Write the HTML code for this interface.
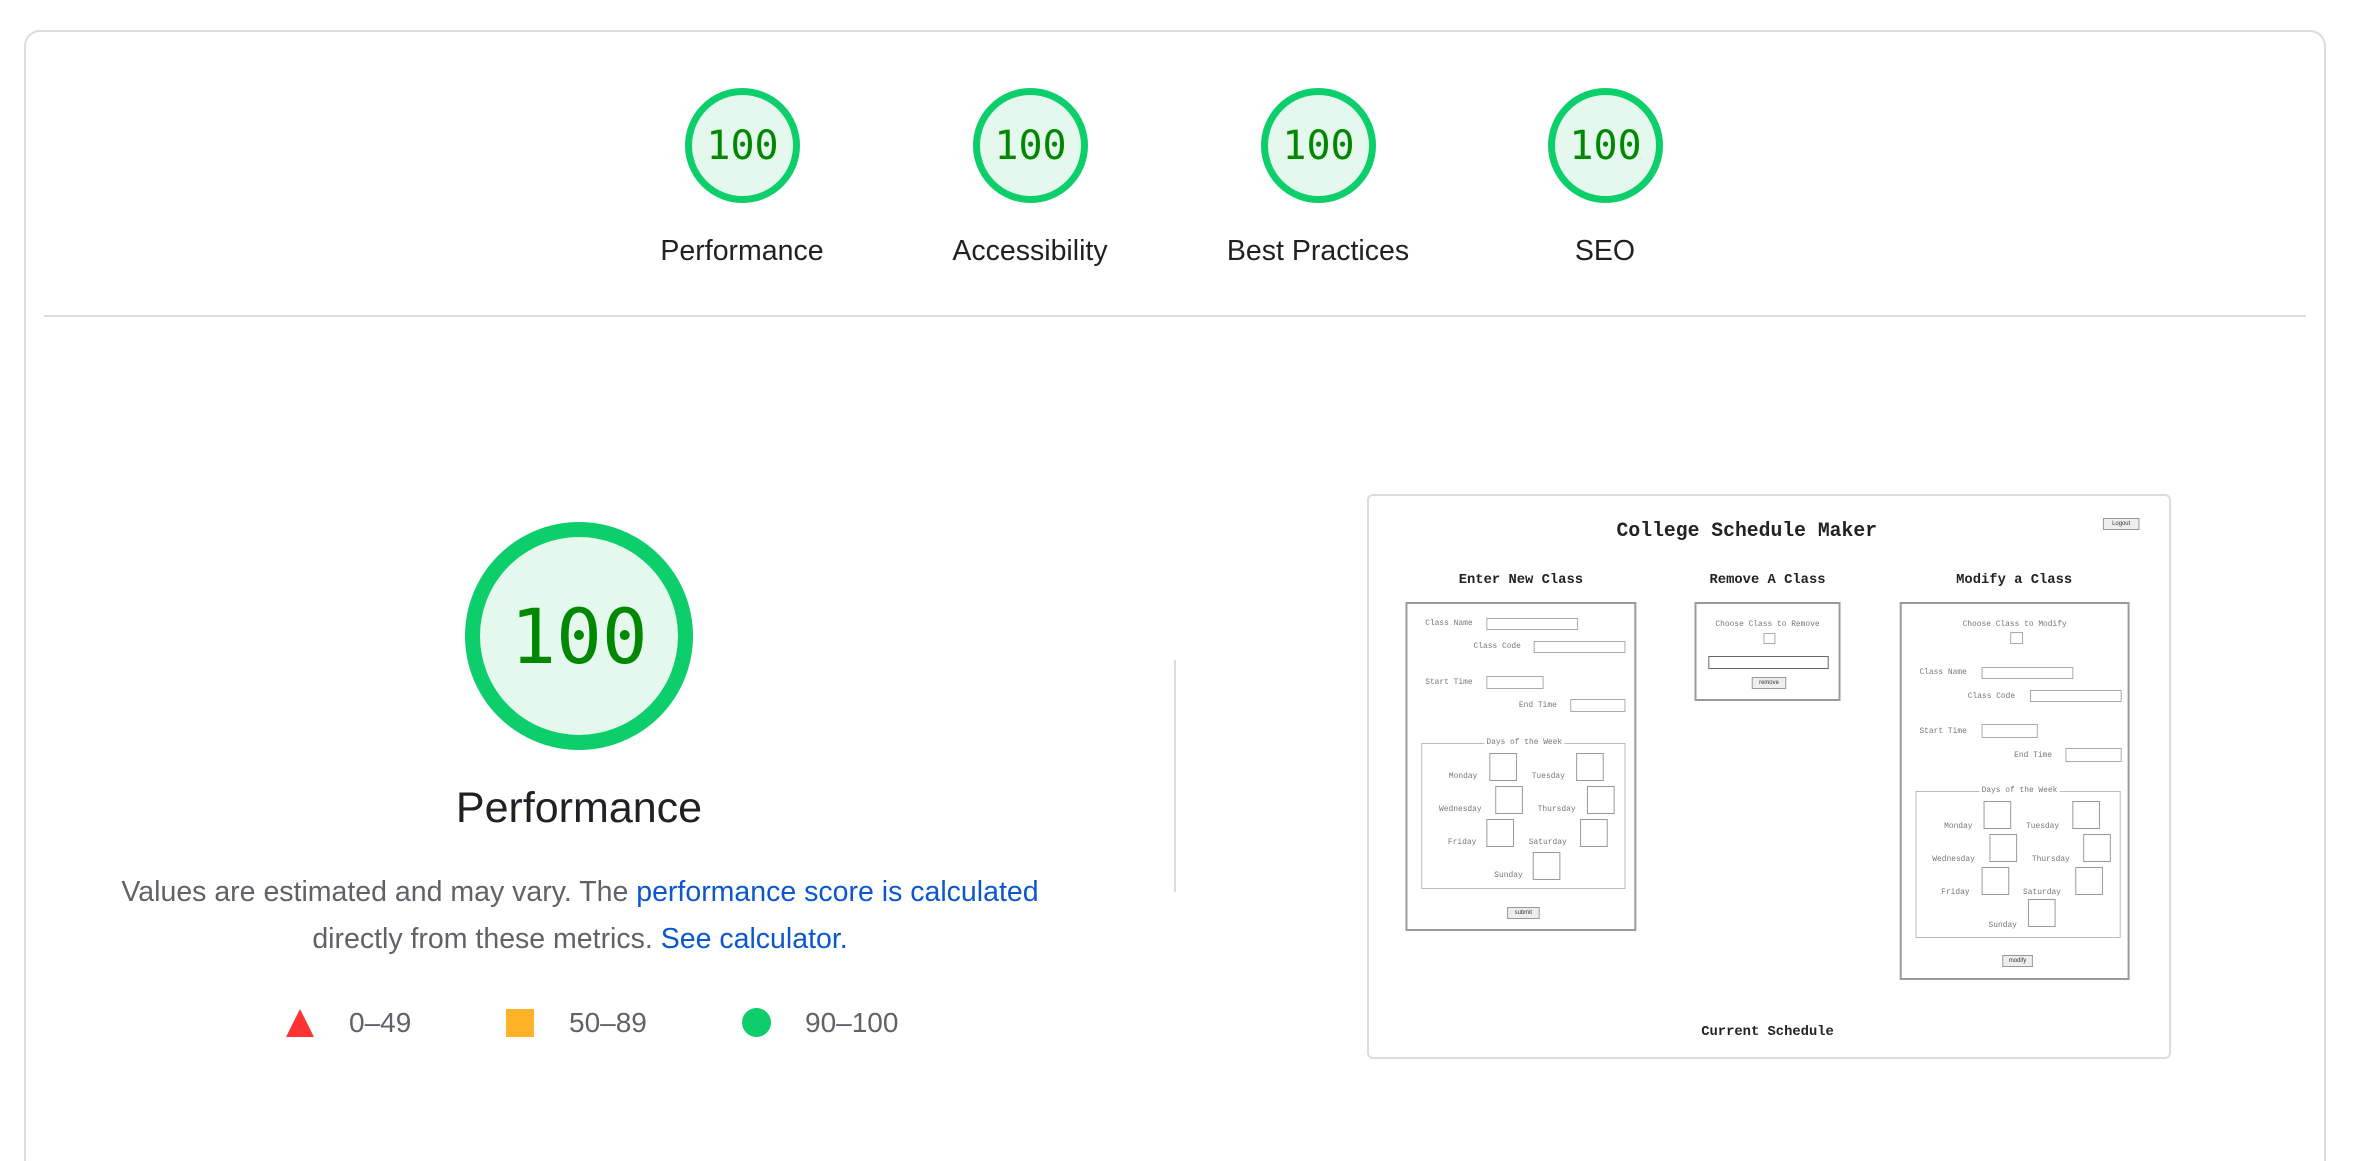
<!DOCTYPE html>
<html><head><meta charset="utf-8">
<style>
*{margin:0;padding:0;box-sizing:border-box}
html,body{width:2379px;height:1161px;overflow:hidden}
body{background:#fff;font-family:"Liberation Sans",Arial,sans-serif;position:relative}
.abs{position:absolute}
.card{left:24px;top:30px;width:2302px;height:1131px;border:2px solid #dadce0;border-bottom:none;border-radius:16px 16px 0 0}
.sep{left:44px;top:315px;width:2262px;height:2px;background:#dadce0}
.g{position:absolute;width:115px;height:115px;border-radius:50%;border:7px solid #0cce6b;background:#e5f8ee;color:#080;font-family:"DejaVu Sans Mono","Liberation Mono",monospace;font-size:40px;display:flex;align-items:center;justify-content:center}
.gl{position:absolute;width:300px;text-align:center;font-size:28.5px;color:#202124}
.big{left:465px;top:522px;width:228px;height:228px;border-width:15px;font-size:76px}
.t{position:absolute;font-family:"Liberation Mono",monospace;color:#777;font-size:8px;white-space:nowrap}
.h{position:absolute;font-family:"Liberation Mono",monospace;font-weight:bold;color:#222;white-space:nowrap;transform:translateX(-50%)}
.bx{position:absolute;border:2px solid #9a9a9a}
.in{position:absolute;border:1px solid #aaa;height:12px}
.cb{position:absolute;border:1px solid #999;width:28px;height:28px}
.btn{position:absolute;border:1px solid #999;background:#eee;font-size:6px;font-family:"Liberation Sans",sans-serif;text-align:center;line-height:10px;color:#333}
#th{position:absolute;left:0;top:0;width:2379px;height:1161px;transform-origin:1367px 493px;transform:scale(0.9865,1)}
</style></head><body>
<div class="abs card"></div>
<div class="abs sep"></div>

<div class="g" style="left:685px;top:88px">100</div>
<div class="g" style="left:973px;top:88px">100</div>
<div class="g" style="left:1261px;top:88px">100</div>
<div class="g" style="left:1548px;top:88px">100</div>
<div class="gl" style="left:592px;top:235px">Performance</div>
<div class="gl" style="left:880px;top:235px">Accessibility</div>
<div class="gl" style="left:1168px;top:235px">Best Practices</div>
<div class="gl" style="left:1455px;top:235px">SEO</div>

<div class="g big">100</div>
<div class="abs" style="left:279px;top:784px;width:600px;text-align:center;font-size:43px;color:#202124">Performance</div>
<div class="abs" style="left:60px;top:869px;width:1040px;text-align:center;font-size:28.5px;color:#5f6368;line-height:47px">Values are estimated and may vary. The <span style="color:#0b57d0">performance score is calculated</span><br>directly from these metrics. <span style="color:#0b57d0">See calculator.</span></div>

<svg class="abs" style="left:285px;top:1008px" width="30" height="30"><polygon points="15,1 29,29 1,29" fill="#f33"/></svg>
<div class="abs" style="left:349px;top:1007px;font-size:28px;color:#5f6368">0–49</div>
<div class="abs" style="left:506px;top:1009px;width:28px;height:28px;background:#ffa400;opacity:.85"></div>
<div class="abs" style="left:569px;top:1007px;font-size:28px;color:#5f6368">50–89</div>
<div class="abs" style="left:742px;top:1008px;width:29px;height:29px;border-radius:50%;background:#0cce6b"></div>
<div class="abs" style="left:805px;top:1007px;font-size:28px;color:#5f6368">90–100</div>

<div class="abs" style="left:1174px;top:660px;width:2px;height:232px;background:#dadce0"></div>

<div id="th">
<div class="abs" style="left:1367px;top:494px;width:815px;height:565px;border:2px solid #dadce0;border-radius:6px"></div>
<div class="h" style="left:1752px;top:520px;font-size:20px">College Schedule Maker</div>
<div class="btn" style="left:2113px;top:518px;width:37px;height:12px">Logout</div>
<div class="h" style="left:1523px;top:572px;font-size:14px">Enter New Class</div>
<div class="h" style="left:1773px;top:572px;font-size:14px">Remove A Class</div>
<div class="h" style="left:2023px;top:572px;font-size:14px">Modify a Class</div>
<div class="h" style="left:1773px;top:1024px;font-size:14px">Current Schedule</div>

<div class="bx" style="left:1406px;top:602px;width:234px;height:329px">
 <div class="t" style="left:18px;top:15px">Class Name</div><div class="in" style="left:80px;top:14px;width:93px"></div>
 <div class="t" style="left:67px;top:38px">Class Code</div><div class="in" style="left:128px;top:37px;width:93px"></div>
 <div class="t" style="left:18px;top:74px">Start Time</div><div class="in" style="left:80px;top:72px;width:58px;height:13px"></div>
 <div class="t" style="left:113px;top:97px">End Time</div><div class="in" style="left:165px;top:95px;width:56px;height:13px"></div>
 <div class="abs" style="left:14px;top:139px;width:207px;height:146px;border:1px solid #bbb"></div>
 <div class="t" style="left:78px;top:134px;background:#fff;padding:0 2px">Days of the Week</div>
 <div class="cb" style="left:83px;top:149px"></div><div class="cb" style="left:171px;top:149px"></div>
 <div class="cb" style="left:89px;top:182px"></div><div class="cb" style="left:182px;top:182px"></div>
 <div class="cb" style="left:80px;top:215px"></div><div class="cb" style="left:175px;top:215px"></div>
 <div class="cb" style="left:127px;top:248px"></div>
 <div class="t" style="left:42px;top:168px">Monday</div><div class="t" style="left:126px;top:168px">Tuesday</div>
 <div class="t" style="left:32px;top:201px">Wednesday</div><div class="t" style="left:132px;top:201px">Thursday</div>
 <div class="t" style="left:41px;top:234px">Friday</div><div class="t" style="left:123px;top:234px">Saturday</div>
 <div class="t" style="left:88px;top:267px">Sunday</div>
 <div class="btn" style="left:101px;top:303px;width:33px;height:12px">submit</div>
</div>

<div class="bx" style="left:1699px;top:602px;width:148px;height:99px">
 <div class="t" style="left:0;width:144px;text-align:center;top:16px">Choose Class to Remove</div>
 <div class="in" style="left:68px;top:29px;width:12px;height:11px"></div>
 <div class="abs" style="left:12px;top:52px;width:122px;height:13px;border:1px solid #666"></div>
 <div class="btn" style="left:56px;top:73px;width:35px;height:12px">remove</div>
</div>

<div class="bx" style="left:1907px;top:602px;width:233px;height:378px">
 <div class="t" style="left:0;width:229px;text-align:center;top:16px">Choose Class to Modify</div>
 <div class="in" style="left:110px;top:28px;width:13px;height:12px"></div>
 <div class="t" style="left:18px;top:64px">Class Name</div><div class="in" style="left:81px;top:63px;width:93px"></div>
 <div class="t" style="left:67px;top:88px">Class Code</div><div class="in" style="left:130px;top:86px;width:93px"></div>
 <div class="t" style="left:18px;top:123px">Start Time</div><div class="in" style="left:81px;top:120px;width:57px;height:14px"></div>
 <div class="t" style="left:114px;top:147px">End Time</div><div class="in" style="left:166px;top:144px;width:57px;height:14px"></div>
 <div class="abs" style="left:14px;top:187px;width:208px;height:147px;border:1px solid #bbb"></div>
 <div class="t" style="left:79px;top:182px;background:#fff;padding:0 2px">Days of the Week</div>
 <div class="cb" style="left:83px;top:197px"></div><div class="cb" style="left:173px;top:197px"></div>
 <div class="cb" style="left:89px;top:230px"></div><div class="cb" style="left:184px;top:230px"></div>
 <div class="cb" style="left:81px;top:263px"></div><div class="cb" style="left:176px;top:263px"></div>
 <div class="cb" style="left:128px;top:295px"></div>
 <div class="t" style="left:43px;top:218px">Monday</div><div class="t" style="left:126px;top:218px">Tuesday</div>
 <div class="t" style="left:31px;top:251px">Wednesday</div><div class="t" style="left:132px;top:251px">Thursday</div>
 <div class="t" style="left:40px;top:284px">Friday</div><div class="t" style="left:123px;top:284px">Saturday</div>
 <div class="t" style="left:88px;top:317px">Sunday</div>
 <div class="btn" style="left:102px;top:351px;width:31px;height:12px">modify</div>
</div>
</div>
</body></html>
